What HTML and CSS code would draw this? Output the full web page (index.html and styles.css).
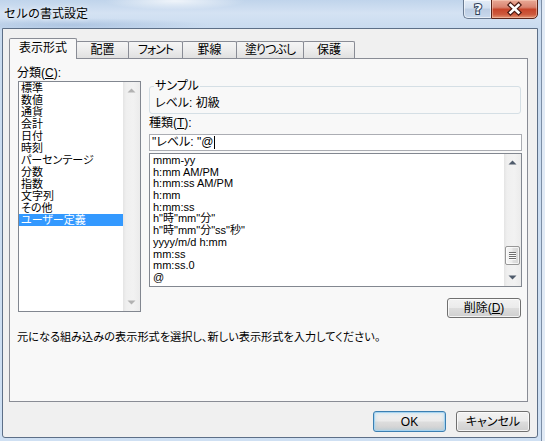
FILE: index.html
```html
<!DOCTYPE html>
<html lang="ja">
<head>
<meta charset="utf-8">
<title>セルの書式設定</title>
<link rel="stylesheet" href="styles.css">
</head>
<body>
<div class="window">
  <div class="titlebar">
    <div class="title">セルの書式設定</div>
    <div class="caption">
      <div class="cap-help">
        <svg width="26" height="18" viewBox="0 0 26 18"><text x="13" y="14" text-anchor="middle" class="q">?</text></svg>
      </div>
      <div class="cap-close">
        <svg width="45" height="18" viewBox="0 0 45 18">
          <path d="M18.5 5 L26.5 12.5 M26.5 5 L18.5 12.5" class="x-out"/>
          <path d="M18.5 5 L26.5 12.5 M26.5 5 L18.5 12.5" class="x-in"/>
        </svg>
      </div>
    </div>
  </div>

  <div class="client">
    <div class="tabs">
      <div class="tab sel w1">表示形式</div>
      <div class="tab w2">配置</div>
      <div class="tab w3 kana">フォント</div>
      <div class="tab w4">罫線</div>
      <div class="tab w5 kana">塗りつぶし</div>
      <div class="tab w6">保護</div>
    </div>

    <div class="page">
      <div class="main">
        <div class="col-left">
          <div class="lbl">分類(<u>C</u>):</div>
          <div class="listbox cat">
            <div class="rows">
              <div class="row">標準</div>
              <div class="row">数値</div>
              <div class="row">通貨</div>
              <div class="row">会計</div>
              <div class="row">日付</div>
              <div class="row">時刻</div>
              <div class="row">パーセンテージ</div>
              <div class="row">分数</div>
              <div class="row">指数</div>
              <div class="row">文字列</div>
              <div class="row">その他</div>
              <div class="row sel">ユーザー定義</div>
            </div>
            <div class="vscroll disabled">
              <div class="arrow"><svg width="9" height="5" viewBox="0 0 9 5"><polygon points="0.5,4.5 4.5,0.5 8.5,4.5"/></svg></div>
              <div class="track"></div>
              <div class="arrow"><svg width="9" height="5" viewBox="0 0 9 5"><polygon points="0.5,0.5 4.5,4.5 8.5,0.5"/></svg></div>
            </div>
          </div>
        </div>

        <div class="col-right">
          <fieldset class="sample">
            <legend>サンプル</legend>
            <div class="val">レベル: 初級</div>
          </fieldset>
          <div class="lbl kind">種類(<u>T</u>):</div>
          <div class="input">"レベル: "@<span class="caret"></span></div>
          <div class="listbox fmt">
            <div class="rows">
              <div class="row">mmm-yy</div>
              <div class="row">h:mm AM/PM</div>
              <div class="row">h:mm:ss AM/PM</div>
              <div class="row">h:mm</div>
              <div class="row">h:mm:ss</div>
              <div class="row">h"時"mm"分"</div>
              <div class="row">h"時"mm"分"ss"秒"</div>
              <div class="row">yyyy/m/d h:mm</div>
              <div class="row">mm:ss</div>
              <div class="row">mm:ss.0</div>
              <div class="row">@</div>
            </div>
            <div class="vscroll">
              <div class="arrow"><svg width="9" height="5" viewBox="0 0 9 5"><polygon points="0.5,4.5 4.5,0.5 8.5,4.5"/></svg></div>
              <div class="track"><div class="thumb"><div class="grip"></div></div></div>
              <div class="arrow"><svg width="9" height="5" viewBox="0 0 9 5"><polygon points="0.5,0.5 4.5,4.5 8.5,0.5"/></svg></div>
            </div>
          </div>
          <div class="btn-row">
            <button class="btn del" type="button">削除(<u>D</u>)</button>
          </div>
        </div>
      </div>
      <div class="desc">元になる組み込みの表示形式を選択し、新しい表示形式を入力してください。</div>
    </div>

    <div class="footer">
      <button class="btn def" type="button">OK</button>
      <button class="btn cancel" type="button">キャンセル</button>
    </div>
  </div>
</div>
</body>
</html>
```
FILE: styles.css
```css
* { box-sizing: border-box; }
html, body { margin: 0; padding: 0; }
body {
  width: 545px;
  height: 441px;
  overflow: hidden;
  font-family: "Liberation Sans", "Noto Sans CJK JP", sans-serif;
  font-size: 12px;
  line-height: 12px;
  color: #000;
  font-feature-settings: "palt" 1;
  background: #cddef1;
}

.window {
  width: 545px;
  height: 441px;
  display: flex;
  flex-direction: column;
  background:
    radial-gradient(ellipse 70px 9px at 175px 1px, rgba(255,255,255,0.75), rgba(255,255,255,0)),
    radial-gradient(ellipse 140px 7px at 70px 25px, rgba(120,155,200,0.35), rgba(120,155,200,0)),
    linear-gradient(180deg, #c0d4eb 0px, #d4e2f3 13px, #c9dbef 28px, #cfe0f3 100%);
  box-shadow: inset -3px 0 0 #e1eaf5, inset -4px 0 0 #7c8ea6;
}

/* title bar */
.titlebar {
  flex: none;
  height: 28px;
  display: flex;
  align-items: flex-start;
}
.title {
  padding: 8px 0 0 4px;
  line-height: 12px;
  font-feature-settings: normal;
  text-shadow: 0 0 5px rgba(255,255,255,0.9);
}
.caption {
  margin-left: auto;
  margin-right: 7px;
  margin-top: -1px;
  display: flex;
  height: 20px;
}
.cap-help {
  width: 28px;
  height: 20px;
  border: 1px solid #6a7b92;
  border-right: none;
  border-radius: 0 0 0 5px;
  background: linear-gradient(180deg, #e3ecf7 0%, #d2dfef 45%, #bccde3 50%, #c9d9ed 100%);
  box-shadow: inset 0 0 0 1px rgba(255,255,255,0.55);
  display: flex;
  align-items: center;
  justify-content: center;
}
.q {
  font-family: "DejaVu Sans", sans-serif;
  font-weight: bold;
  font-size: 14px;
  fill: #f4f7fb;
  stroke: #2f4058;
  stroke-width: 2px;
  paint-order: stroke;
}
.cap-close {
  width: 47px;
  height: 20px;
  border: 1px solid #5b2419;
  border-radius: 0 0 5px 0;
  background: linear-gradient(180deg, #e9a996 0%, #d98470 40%, #c7452a 52%, #cd5a3d 80%, #e39574 100%);
  box-shadow: inset 0 0 0 1px rgba(255,220,200,0.45);
  display: flex;
  align-items: center;
  justify-content: center;
}
.x-out { stroke: #4a1a12; stroke-width: 5px; stroke-linecap: square; fill: none; }
.x-in { stroke: #ffffff; stroke-width: 2.6px; stroke-linecap: square; fill: none; }

/* client */
.client {
  flex: none;
  margin-left: 2px;
  width: 536px;
  height: 410px;
  border: 1px solid #5d6f87;
  border-radius: 0 0 3px 3px;
  background: #f0f0f0;
  padding: 9px 9px 0 6px;
  display: flex;
  flex-direction: column;
}

/* tabs */
.tabs {
  flex: none;
  height: 21px;
  margin-bottom: -1px;
  display: flex;
  align-items: flex-end;
}
.tab {
  height: 17px;
  margin-bottom: 1px;
  margin-left: -1px;
  border: 1px solid #898c95;
  border-bottom: none;
  border-radius: 2px 2px 0 0;
  background: linear-gradient(180deg, #f5f5f5 0%, #ececec 50%, #e0e0e0 100%);
  text-align: center;
  line-height: 14px;
  padding-top: 1px;
  white-space: nowrap;
}
.tab.kana { letter-spacing: -1px; }
.tab.sel {
  position: relative;
  z-index: 1;
  height: 21px;
  margin: 0;
  background: #f8f8f8;
  line-height: 17px;
  padding-top: 1px;
}
.w1 { width: 68px; }
.w2 { width: 53px; }
.w3 { width: 55px; }
.w4 { width: 55px; }
.w5 { width: 68px; }
.w6 { width: 52px; }

/* page */
.page {
  flex: none;
  height: 344px;
  border: 1px solid #898c95;
  background: #f8f8f8;
  padding: 7px 0 0 7px;
  display: flex;
  flex-direction: column;
}
.main {
  display: grid;
  grid-template-columns: 132px 373px;
  align-items: start;
}
.lbl { line-height: 14px; }
u { text-decoration: underline; text-underline-offset: 1px; }

.col-left .listbox {
  margin: 1px 0 0 1px;
  width: 123px;
  height: 231px;
}
.col-right { margin-top: 13px; }

/* list boxes */
.listbox {
  display: flex;
  border: 1px solid #828790;
  background: #fff;
}
.rows { flex: 1; min-width: 0; }
.row {
  height: 12px;
  line-height: 12px;
  font-size: 11px;
  padding-left: 2px;
  white-space: nowrap;
}
.row.sel { background: #3399ff; color: #fff; }
.fmt .rows { padding-top: 1px; }
.fmt .row { height: 11.7px; line-height: 11.7px; padding-left: 3px; }

.vscroll {
  flex: none;
  width: 17px;
  display: flex;
  flex-direction: column;
  background: linear-gradient(90deg, #e4e4e4 0%, #efefef 18%, #f2f2f2 60%, #ebebeb 100%);
}
.arrow {
  flex: none;
  height: 17px;
  display: flex;
  align-items: center;
  justify-content: center;
}
.arrow polygon { fill: #4f5b6b; }
.disabled .arrow polygon { fill: #b2b2b2; }
.track { flex: 1; display: flex; flex-direction: column; }
.thumb {
  margin: auto 1px 4px 1px;
  height: 19px;
  border: 1px solid #979797;
  border-radius: 2px;
  background: linear-gradient(90deg, #f7f7f7 0%, #ededed 45%, #dfdfdf 55%, #d6d6d6 100%);
  box-shadow: inset 0 0 0 1px rgba(255,255,255,0.7);
  display: flex;
  align-items: center;
  justify-content: center;
}
.grip {
  width: 7px;
  height: 8px;
  background: repeating-linear-gradient(180deg, #6e6e6e 0px, #6e6e6e 1px, #fbfbfb 1px, #fbfbfb 2px);
}

/* sample group */
.sample {
  margin: 0;
  width: 372px;
  min-inline-size: 0;
  padding: 3px 4px 3px 4px;
  border: 1px solid #d5dfe5;
  border-radius: 3px;
}
.sample legend {
  padding: 0 1px;
  line-height: 14px;
}
.sample .val { line-height: 14px; padding-left: 1px; }

.kind { margin-top: 2px; }
.input {
  margin-top: 4px;
  width: 373px;
  height: 17px;
  border: 1px solid #abadb3;
  background: #fff;
  padding-left: 2px;
  display: flex;
  align-items: center;
  line-height: 13px;
}
.caret {
  display: inline-block;
  width: 1px;
  height: 13px;
  background: #000;
  margin-left: 1px;
}
.fmt {
  margin-top: 2px;
  width: 373px;
  height: 134px;
}

/* buttons */
.btn {
  font: inherit;
  color: #000;
  padding: 0;
  margin: 0;
  height: 21px;
  width: 73px;
  border: 1px solid #707070;
  border-radius: 3px;
  background: linear-gradient(180deg, #f2f2f2 0%, #ebebeb 48%, #dddddd 52%, #cfcfcf 100%);
  box-shadow: inset 0 0 0 1px rgba(252,252,252,0.8);
  line-height: 12px;
  text-align: center;
}
.btn-row {
  display: flex;
  justify-content: flex-end;
  margin-top: 11px;
  margin-right: 1px;
}
.btn.del { width: 74px; height: 20px; }
.btn.def {
  border-color: #3c7fb1;
  box-shadow: inset 0 0 0 1px #a6d3f0, inset 0 0 3px 2px rgba(120,200,240,0.25);
}
.btn.cancel { width: 74px; }

.desc {
  margin-top: 13px;
  line-height: 12px;
  font-size: 11.2px;
  white-space: nowrap;
}

.footer {
  flex: none;
  display: flex;
  justify-content: flex-end;
  gap: 10px;
  margin-top: 9px;
  margin-right: -2px;
}
```
